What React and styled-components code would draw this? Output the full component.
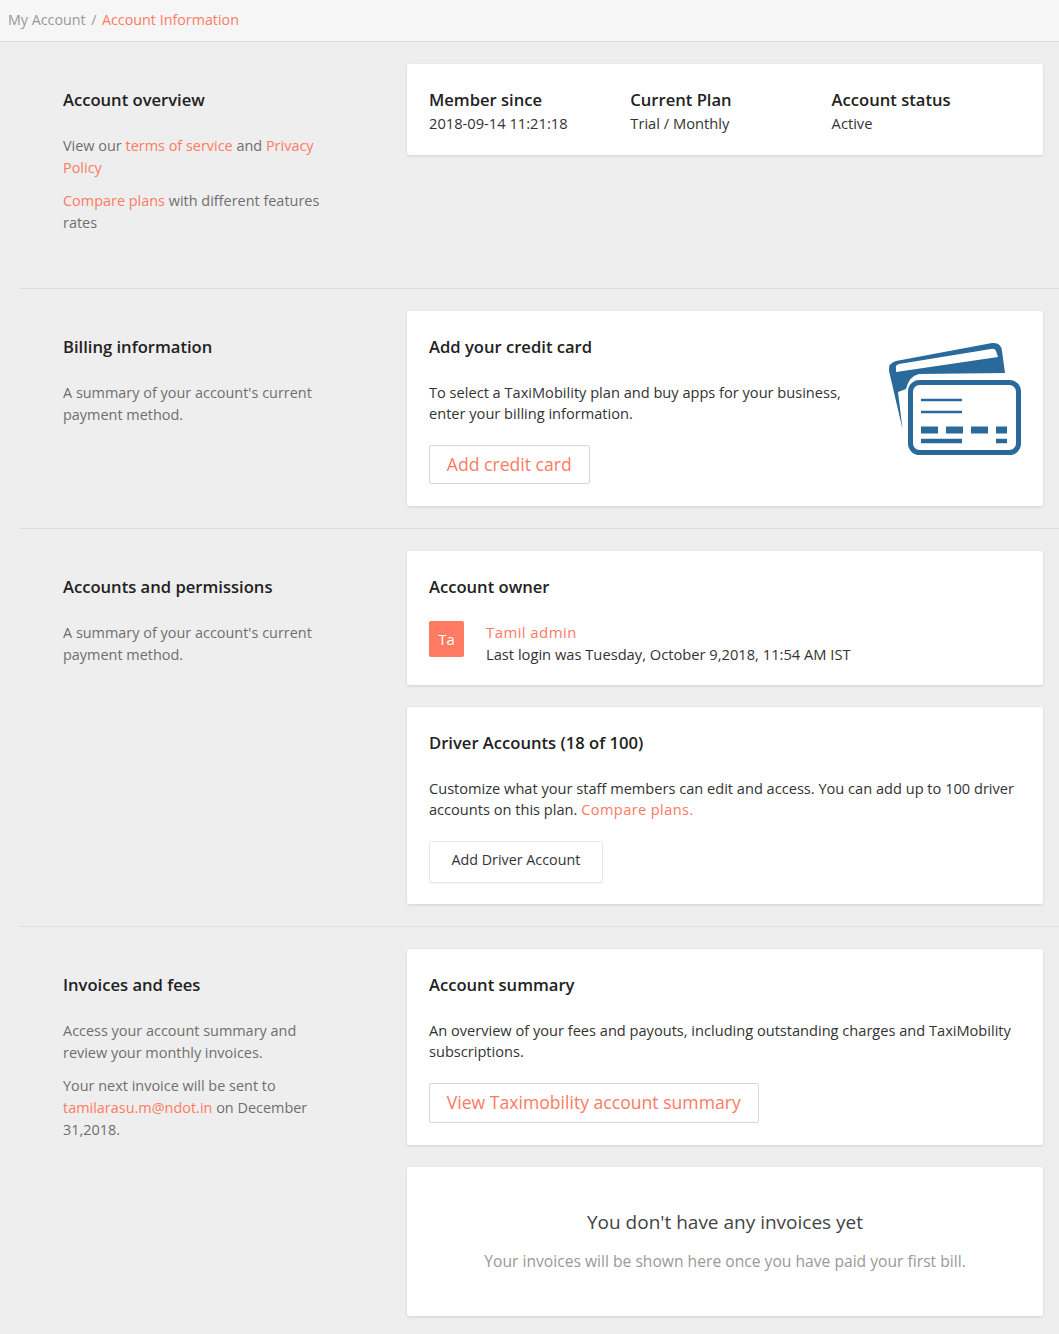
import React from 'react';
import styled, { createGlobalStyle } from 'styled-components';

const GlobalStyle = createGlobalStyle`
  html, body {
    margin: 0;
    padding: 0;
    background: #eeeeee;
    font-family: "Open Sans", "Noto Sans", sans-serif;
    font-size: 14.6px;
    color: #222;
  }
`;

const Breadcrumb = styled.div`
  height: 39px;
  padding: 0 0 2px 8px;
  display: flex;
  align-items: center;
  gap: 5.5px;
  background: #f6f6f6;
  border-bottom: 1px solid #d9d9d9;
  font-size: 14.3px;
  color: #999;
`;

const Crumb = styled.span`
  color: ${(p) => (p.$active ? '#ff7a63' : '#999')};
`;

const Section = styled.section`
  display: grid;
  grid-template-columns: 388px 636px;
  margin-left: 19px;
  padding: 22px 0 22px;
  min-height: ${(p) => p.$minHeight || 0}px;
  box-sizing: border-box;
  border-bottom: ${(p) => (p.$last ? 'none' : '1px solid #d6e0e8')};
`;

const Intro = styled.div`
  padding: 0 0 0 44px;
  width: 262px;
`;

const Heading = styled.h3`
  margin: 0;
  padding-top: 24px;
  font-size: 16.6px;
  line-height: 24px;
  font-weight: 600;
  color: #222;
`;

const IntroText = styled.p`
  margin: ${(p) => p.$top || 0}px 0 0;
  font-size: 14.45px;
  line-height: 22px;
  color: #6f6f6f;
`;

const Cards = styled.div`
  display: flex;
  flex-direction: column;
  gap: 22px;
`;

const Card = styled.div`
  background: #fff;
  border-radius: 2px;
  box-shadow: 0 1px 3px rgba(0, 0, 0, 0.12);
  padding: 22px;
  box-sizing: border-box;
  height: ${(p) => (p.$height ? `${p.$height}px` : 'auto')};
`;

const Stats = styled(Card)`
  display: grid;
  grid-template-columns: repeat(3, 201.3px);
  height: 91px;
  padding-top: 25px;
`;

const StatLabel = styled.div`
  font-size: 16.6px;
  line-height: 22px;
  font-weight: 600;
`;

const StatValue = styled.div`
  font-size: 14.7px;
  line-height: 24px;
  color: #333;
`;

const CardTitle = styled.h4`
  margin: 0;
  padding-top: 2px;
  font-size: 16.6px;
  line-height: 24px;
  font-weight: 600;
  color: #222;
`;

const CardText = styled.p`
  margin: 23px 0 0;
  font-size: 14.6px;
  line-height: 21px;
  color: #333;
`;

const Link = styled.a`
  color: #ff7a63;
  text-decoration: none;
`;

const CardLink = styled(Link)`
  letter-spacing: 0.4px;
`;

const BillingCard = styled(Card)`
  display: flex;
  justify-content: space-between;
  height: 195px;
`;

const OutlineButton = styled.button`
  display: block;
  margin-top: 21px;
  height: ${(p) => p.$height || 40}px;
  padding: 0 16.8px 2px;
  background: #fff;
  border: 1px solid #d8d8d8;
  border-radius: 2px;
  font: inherit;
  font-size: 17.6px;
  color: #ff7a63;
`;

const PlainButton = styled.button`
  display: block;
  margin-top: 21px;
  height: 42px;
  padding: 0 21.5px 5px;
  background: #fff;
  border: 1px solid #e8e8e8;
  border-radius: 3px;
  box-shadow: 0 1px 1px rgba(0, 0, 0, 0.04);
  font: inherit;
  font-size: 14.3px;
  color: #333;
`;

const Owner = styled.div`
  display: flex;
  align-items: flex-start;
  gap: 22px;
  margin-top: 22px;
`;

const Avatar = styled.div`
  flex: none;
  width: 35px;
  height: 36px;
  border-radius: 2px;
  background: #ff7a63;
  color: #fff;
  display: flex;
  align-items: center;
  justify-content: center;
  font-size: 15px;
`;

const OwnerInfo = styled.div`
  font-size: 14.7px;
  line-height: 22px;
  color: #333;
`;

const OwnerName = styled(Link)`
  display: block;
  font-size: 15px;
  letter-spacing: 0.4px;
`;

const EmptyCard = styled(Card)`
  height: 149px;
  text-align: center;
  padding-top: 41px;
`;

const EmptyTitle = styled.div`
  font-size: 19px;
  line-height: 28px;
  color: #444;
`;

const EmptyText = styled.div`
  margin-top: 13px;
  font-size: 15.65px;
  line-height: 24px;
  color: #999;
`;

const IconSvg = styled.svg`
  flex: none;
  margin-top: 7px;
`;

const CardIcon = () => (
  <IconSvg width="136" height="116" viewBox="0 0 136 116" fill="none">
    <path
      d="M17.5 89 L4 31 Q3 23 11 21 L107 3 Q116 2 117 11 L120 33 L34 34 Q24 36 21 49 L13 52 Z M11 32 L113 17 L111 11 Q110 8 106 9 L14 24 Q10 25 11 29 Z"
      fill="#2a6a9b"
      fillRule="evenodd"
    />
    <rect x="25.5" y="42.5" width="108" height="70" rx="9" fill="#fff" stroke="#2a6a9b" strokeWidth="5" />
    <path d="M36 60 H77 M36 72 H77" stroke="#2a6a9b" strokeWidth="2.7" />
    <path d="M36 90 H53 M61 90 H78 M86 90 H103 M111 90 H122" stroke="#2a6a9b" strokeWidth="7" />
    <path d="M36 101 H77 M111 101 H122" stroke="#2a6a9b" strokeWidth="4.5" />
  </IconSvg>
);

export default function App() {
  return (
    <>
      <GlobalStyle />
      <Breadcrumb>
        <Crumb>My Account</Crumb>
        <span>/</span>
        <Crumb $active>Account Information</Crumb>
      </Breadcrumb>

      <Section $minHeight={247}>
        <Intro>
          <Heading>Account overview</Heading>
          <IntroText $top={23}>
            View our <Link>terms of service</Link> and <Link>Privacy Policy</Link>
          </IntroText>
          <IntroText $top={11}>
            <Link>Compare plans</Link> with different features rates
          </IntroText>
        </Intro>
        <Cards>
          <Stats>
            <div>
              <StatLabel>Member since</StatLabel>
              <StatValue>2018-09-14 11:21:18</StatValue>
            </div>
            <div>
              <StatLabel>Current Plan</StatLabel>
              <StatValue>Trial / Monthly</StatValue>
            </div>
            <div>
              <StatLabel>Account status</StatLabel>
              <StatValue>Active</StatValue>
            </div>
          </Stats>
        </Cards>
      </Section>

      <Section>
        <Intro>
          <Heading>Billing information</Heading>
          <IntroText $top={23}>A summary of your account's current payment method.</IntroText>
        </Intro>
        <Cards>
          <BillingCard>
            <div>
              <CardTitle>Add your credit card</CardTitle>
              <CardText>
                To select a TaxiMobility plan and buy apps for your business,
                <br />
                enter your billing information.
              </CardText>
              <OutlineButton $height={39}>Add credit card</OutlineButton>
            </div>
            <CardIcon />
          </BillingCard>
        </Cards>
      </Section>

      <Section>
        <Intro>
          <Heading>Accounts and permissions</Heading>
          <IntroText $top={23}>A summary of your account's current payment method.</IntroText>
        </Intro>
        <Cards>
          <Card $height={134}>
            <CardTitle>Account owner</CardTitle>
            <Owner>
              <Avatar>Ta</Avatar>
              <OwnerInfo>
                <OwnerName>Tamil admin</OwnerName>
                <div>Last login was Tuesday, October 9,2018, 11:54 AM IST</div>
              </OwnerInfo>
            </Owner>
          </Card>
          <Card $height={197}>
            <CardTitle>Driver Accounts (18 of 100)</CardTitle>
            <CardText>
              Customize what your staff members can edit and access. You can add up to 100 driver accounts on this
              plan. <CardLink>Compare plans.</CardLink>
            </CardText>
            <PlainButton>Add Driver Account</PlainButton>
          </Card>
        </Cards>
      </Section>

      <Section $last>
        <Intro>
          <Heading>Invoices and fees</Heading>
          <IntroText $top={23}>Access your account summary and review your monthly invoices.</IntroText>
          <IntroText $top={11}>
            Your next invoice will be sent to <Link>tamilarasu.m@ndot.in</Link> on December 31,2018.
          </IntroText>
        </Intro>
        <Cards>
          <Card $height={196}>
            <CardTitle>Account summary</CardTitle>
            <CardText>
              An overview of your fees and payouts, including outstanding charges and TaxiMobility subscriptions.
            </CardText>
            <OutlineButton>View Taximobility account summary</OutlineButton>
          </Card>
          <EmptyCard>
            <EmptyTitle>You don't have any invoices yet</EmptyTitle>
            <EmptyText>Your invoices will be shown here once you have paid your first bill.</EmptyText>
          </EmptyCard>
        </Cards>
      </Section>
    </>
  );
}
